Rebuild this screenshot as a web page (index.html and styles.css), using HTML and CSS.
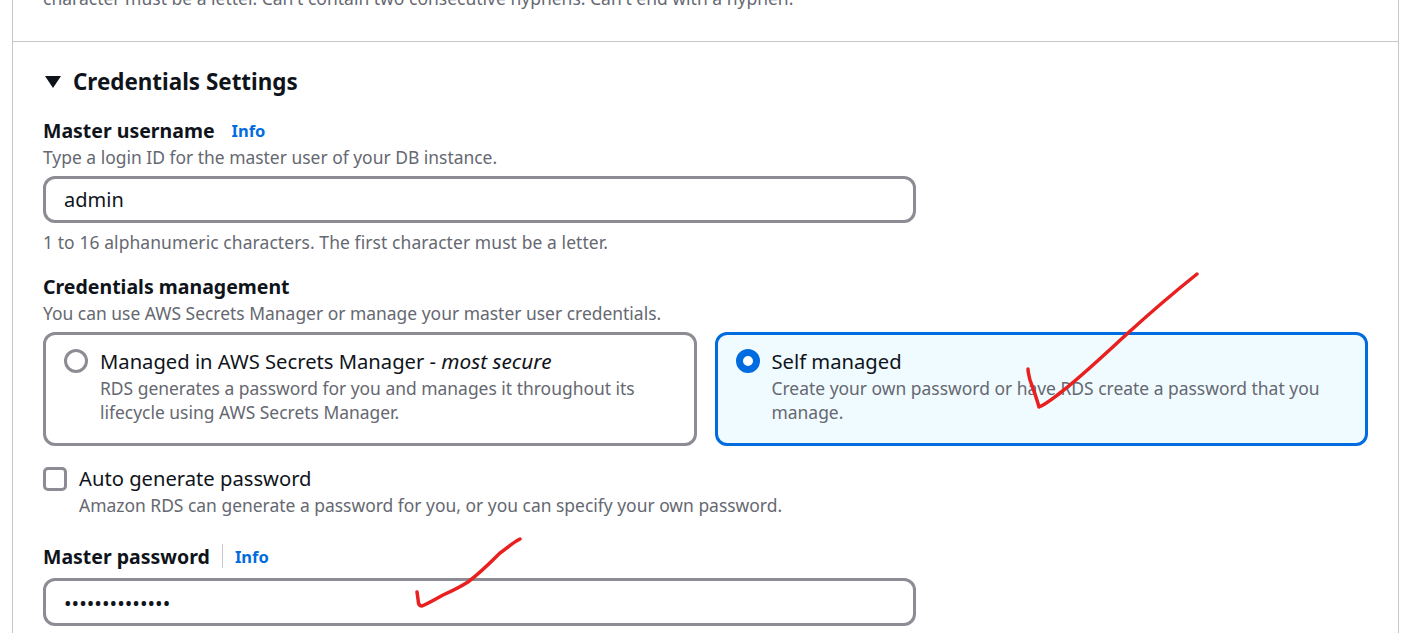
FILE: index.html
```html
<!DOCTYPE html>
<html lang="en">
<head>
    <meta charset="UTF-8">
    <meta name="viewport" content="width=device-width, initial-scale=1.0">
    <title>Credentials Settings</title>
    <link rel="stylesheet" href="styles.css">
</head>
<body>
    <div class="panel">
        <div class="cut-text">
            <p>character must be a letter. Can't contain two consecutive hyphens. Can't end with a hyphen.</p>
        </div>
        <div class="section">
            <h2 class="section-title">
                <svg class="caret" width="16" height="12" viewBox="0 0 16 12"><polygon points="0,0 16,0 8,12"/></svg>
                Credentials Settings
            </h2>

            <div class="label-row label-first">
                <span class="label">Master username</span>
                <a class="info">Info</a>
            </div>
            <p class="hint">Type a login ID for the master user of your DB instance.</p>
            <div class="input">admin</div>
            <p class="hint hint-below">1 to 16 alphanumeric characters. The first character must be a letter.</p>

            <div class="label-row label-mgmt">
                <span class="label">Credentials management</span>
            </div>
            <p class="hint">You can use AWS Secrets Manager or manage your master user credentials.</p>
            <div class="tiles">
                <div class="tile">
                    <span class="radio"></span>
                    <div class="tile-text">
                        <div class="tile-title">Managed in AWS Secrets Manager - <em>most secure</em></div>
                        <div class="tile-desc">RDS generates a password for you and manages it throughout its lifecycle using AWS Secrets Manager.</div>
                    </div>
                </div>
                <div class="tile tile-on">
                    <span class="radio radio-on"></span>
                    <div class="tile-text">
                        <div class="tile-title">Self managed</div>
                        <div class="tile-desc">Create your own password or have RDS create a password that you manage.</div>
                    </div>
                </div>
            </div>

            <div class="check-row">
                <span class="checkbox"></span>
                <div>
                    <div class="tile-title">Auto generate password</div>
                    <div class="tile-desc">Amazon RDS can generate a password for you, or you can specify your own password.</div>
                </div>
            </div>

            <div class="label-row label-pass">
                <span class="label">Master password</span>
                <span class="divider"></span>
                <a class="info">Info</a>
            </div>
            <div class="input input-pass">••••••••••••••</div>
        </div>
    </div>

    <!-- red pen marks drawn over the screenshot -->
    <svg class="marks" width="1414" height="633" viewBox="0 0 1414 633">
        <path d="M1197 274 C1172 294 1150 313 1128 333 C1105 354 1082 376 1060 393 C1052 399 1046 404 1039 407 C1036 396 1032 386 1030 380 C1029 376 1028 372 1028 369"/>
        <path d="M520 539 C512 543 506 549 500 553 C490 563 480 573 468 582 C460 587 452 591 443 595 C436 599 429 603 422 606 C420 606 419 605 418.5 603 C418 599 417.5 595 417 592"/>
    </svg>
</body>
</html>
```

FILE: styles.css
```css
body {
    font-family: "Noto Sans", Arial, sans-serif;
    margin: 0;
    padding: 0;
    height: 633px;
    overflow: hidden;
    background: #fff;
    color: #0f141a;
    position: relative;
}
p {
    margin: 0;
}
.panel {
    margin: 0 15px 0 12px;
    border-left: 1px solid #c6c6cd;
    border-right: 1px solid #c6c6cd;
    height: 633px;
    box-sizing: border-box;
}
.cut-text {
    height: 41px;
    padding-left: 30px;
    box-sizing: border-box;
    overflow: hidden;
}
.cut-text p {
    font-size: 17.5px;
    line-height: 22px;
    color: #656871;
    margin-top: -13px;
}
.section {
    border-top: 1px solid #c6c6cd;
    padding: 0 30px;
}
.section-title {
    display: flex;
    align-items: center;
    gap: 12px;
    margin: 24px 0 0 2px;
    font-size: 22.4px;
    line-height: 32px;
    font-weight: 700;
}
.caret {
    fill: #0f141a;
}
.label-row {
    display: flex;
    align-items: center;
    height: 26px;
}
.label-first {
    margin-top: 19px;
}
.label-mgmt {
    margin-top: 19px;
}
.label-pass {
    margin-top: 26px;
}
.label {
    font-size: 19.5px;
    font-weight: 700;
}
.info {
    color: #006ce0;
    font-size: 16.5px;
    font-weight: 700;
    margin-left: 17px;
}
.divider {
    width: 1px;
    height: 24px;
    background: #c6c6cd;
    margin-left: 12px;
}
.divider + .info {
    margin-left: 12px;
}
.hint {
    font-size: 17.45px;
    line-height: 24px;
    color: #656871;
    margin-top: 2px;
}
.hint-below {
    margin-top: 7px;
    letter-spacing: 0.1px;
}
.input {
    width: 873px;
    height: 47px;
    box-sizing: border-box;
    border: 3px solid #8c8c94;
    border-radius: 12px;
    padding: 0 18px;
    margin-top: 7px;
    font-size: 20px;
    line-height: 41px;
}
.input-pass {
    margin-top: 9px;
    font-size: 20.2px;
    line-height: 45px;
    height: 48px;
}
.tiles {
    display: flex;
    gap: 18px;
    margin-top: 7px;
    width: 1325px;
}
.tile {
    flex: 1;
    display: flex;
    gap: 12px;
    height: 114px;
    box-sizing: border-box;
    border: 3px solid #8c8c94;
    border-radius: 12px;
    padding: 12px 18px;
}
.tile-on {
    border-color: #006ce0;
    background: #f0fbff;
}
.radio {
    flex: none;
    width: 24px;
    height: 24px;
    box-sizing: border-box;
    border: 3px solid #8c8c94;
    border-radius: 50%;
    margin-top: 2px;
}
.radio-on {
    border: 7.5px solid #006ce0;
    background: #fff;
}
.tile-title {
    font-size: 20.2px;
    line-height: 28px;
}
.tile-title em {
    font-size: 20.8px;
}
.tile-desc {
    font-size: 17.45px;
    line-height: 24px;
    color: #656871;
    margin-top: 1px;
}
.check-row {
    display: flex;
    gap: 12px;
    margin-top: 18px;
}
.checkbox {
    flex: none;
    width: 24px;
    height: 24px;
    box-sizing: border-box;
    border: 3px solid #8c8c94;
    border-radius: 5px;
    margin-top: 3px;
}
.marks {
    position: absolute;
    top: 0;
    left: 0;
    fill: none;
    stroke: #e8201f;
    stroke-width: 3.5;
    stroke-linecap: round;
    stroke-linejoin: round;
}
```
